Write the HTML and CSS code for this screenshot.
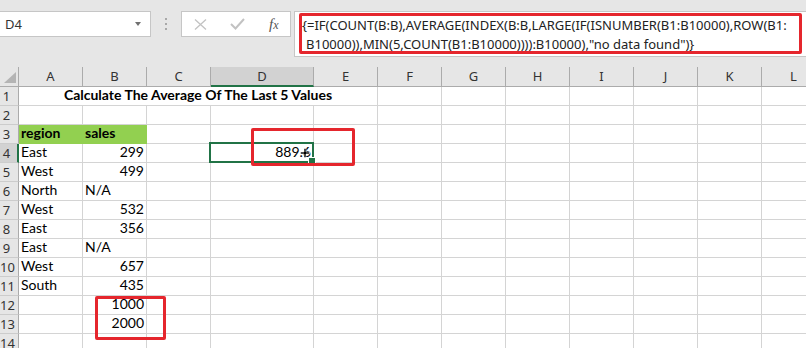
FILE: index.html
```html
<!DOCTYPE html>
<html lang="en">
<head>
    <meta charset="UTF-8">
    <meta name="viewport" content="width=device-width, initial-scale=1.0">
    <title>Average Of The Last 5 Values</title>
    <link rel="stylesheet" href="styles.css">
</head>
<body>
    <div class="formula-row">
        <div class="name-box">D4<span class="caret"></span></div>
        <div class="grip"><span></span><span></span><span></span></div>
        <div class="fx-buttons">
            <svg class="icon-cancel" width="13" height="11" viewBox="0 0 13 11"><path d="M1 0.5 L12 10.5 M12 0.5 L1 10.5" stroke="#c2c2c2" stroke-width="1.3" fill="none"/></svg>
            <svg class="icon-enter" width="15" height="12" viewBox="0 0 15 12"><path d="M1 6 L5.5 10.5 L14 1" stroke="#c2c2c2" stroke-width="2" fill="none"/></svg>
            <span class="fx"><i>f</i><i class="sub">x</i></span>
        </div>
        <div class="formula-bar">
            <div class="formula-text">
                <div>{=IF(COUNT(B:B),AVERAGE(INDEX(B:B,LARGE(IF(ISNUMBER(B1:B10000),ROW(B1:</div>
                <div class="wrap">B10000)),MIN(5,COUNT(B1:B10000)))):B10000),"no data found")}</div>
            </div>
        </div>
    </div>

    <div class="sheet">
        <div class="corner"></div>
        <div class="ch">A</div><div class="ch">B</div><div class="ch">C</div><div class="ch sel">D</div><div class="ch">E</div><div class="ch">F</div><div class="ch">G</div><div class="ch">H</div><div class="ch">I</div><div class="ch">J</div><div class="ch">K</div><div class="ch">L</div>

        <div class="rh"><span>1</span></div>
        <div class="title">Calculate The Average Of The Last 5 Values</div>
        <div></div><div></div><div></div><div></div><div></div><div></div><div></div>

        <div class="rh"><span>2</span></div>
        <div></div><div></div><div></div><div></div><div></div><div></div><div></div><div></div><div></div><div></div><div></div><div></div>

        <div class="rh"><span>3</span></div>
        <div class="hd">region</div><div class="hd">sales</div>
        <div></div><div></div><div></div><div></div><div></div><div></div><div></div><div></div><div></div><div></div>

        <div class="rh sel"><span>4</span></div>
        <div>East</div><div class="num">299</div><div></div>
        <div class="num active">889.6
            <svg class="pointer" width="10" height="10" viewBox="0 0 10 10"><path d="M4 0.5h2v3.5h3.5v2h-3.5v3.5h-2v-3.5h-3.5v-2h3.5z" fill="#000" stroke="#fff" stroke-width="0.6"/></svg>
            <span class="mark mark-result"></span>
        </div>
        <div></div><div></div><div></div><div></div><div></div><div></div><div></div><div></div>

        <div class="rh"><span>5</span></div>
        <div>West</div><div class="num">499</div>
        <div></div><div></div><div></div><div></div><div></div><div></div><div></div><div></div><div></div><div></div>

        <div class="rh"><span>6</span></div>
        <div>North</div><div>N/A</div>
        <div></div><div></div><div></div><div></div><div></div><div></div><div></div><div></div><div></div><div></div>

        <div class="rh"><span>7</span></div>
        <div>West</div><div class="num">532</div>
        <div></div><div></div><div></div><div></div><div></div><div></div><div></div><div></div><div></div><div></div>

        <div class="rh"><span>8</span></div>
        <div>East</div><div class="num">356</div>
        <div></div><div></div><div></div><div></div><div></div><div></div><div></div><div></div><div></div><div></div>

        <div class="rh"><span>9</span></div>
        <div>East</div><div>N/A</div>
        <div></div><div></div><div></div><div></div><div></div><div></div><div></div><div></div><div></div><div></div>

        <div class="rh"><span>10</span></div>
        <div>West</div><div class="num">657</div>
        <div></div><div></div><div></div><div></div><div></div><div></div><div></div><div></div><div></div><div></div>

        <div class="rh"><span>11</span></div>
        <div>South</div><div class="num">435</div>
        <div></div><div></div><div></div><div></div><div></div><div></div><div></div><div></div><div></div><div></div>

        <div class="rh"><span>12</span></div>
        <div></div><div class="num marked">1000<span class="mark mark-new"></span></div>
        <div></div><div></div><div></div><div></div><div></div><div></div><div></div><div></div><div></div><div></div>

        <div class="rh"><span>13</span></div>
        <div></div><div class="num">2000</div>
        <div></div><div></div><div></div><div></div><div></div><div></div><div></div><div></div><div></div><div></div>

        <div class="rh"><span>14</span></div>
        <div></div><div></div><div></div><div></div><div></div><div></div><div></div><div></div><div></div><div></div><div></div><div></div>
    </div>
</body>
</html>
```

FILE: styles.css
```css
* {
    box-sizing: border-box;
}

body {
    margin: 0;
    width: 806px;
    height: 348px;
    overflow: hidden;
    background-color: #e6e6e6;
    font-family: "Noto Sans", sans-serif;
    color: #000;
}

/* formula bar */
.formula-row {
    display: flex;
    align-items: flex-start;
    height: 67px;
    padding-top: 11px;
}

.name-box {
    width: 151px;
    height: 26px;
    background-color: #fff;
    border: 1px solid #c6c6c6;
    border-left: none;
    display: flex;
    align-items: center;
    justify-content: space-between;
    padding: 0 9px 0 5px;
    font-size: 13px;
    color: #333;
}

.caret {
    width: 0;
    height: 0;
    border-left: 3.5px solid transparent;
    border-right: 3.5px solid transparent;
    border-top: 4px solid #707070;
}

.grip {
    width: 30px;
    height: 26px;
    display: flex;
    flex-direction: column;
    align-items: center;
    justify-content: center;
    gap: 3px;
}

.grip span {
    width: 2px;
    height: 2px;
    background-color: #a8a8a8;
}

.fx-buttons {
    width: 110px;
    height: 26px;
    background-color: #fff;
    border: 1px solid #c6c6c6;
    display: flex;
    align-items: center;
    padding-left: 12px;
}

.icon-enter {
    margin-left: 23px;
}

.fx {
    margin-left: 24px;
    font-family: "Liberation Serif", serif;
    font-size: 15px;
    color: #555;
}

.fx .sub {
    font-size: 12px;
}

.formula-bar {
    flex: 1;
    height: 46px;
    margin-left: 3px;
    background-color: #fff;
    border: 1px solid #c6c6c6;
    border-right: none;
    padding: 1px 4px 0 4px;
}

.formula-text {
    height: 41px;
    border: 3px solid #e5262d;
    border-radius: 2px;
    font-size: 13px;
    line-height: 19px;
    white-space: nowrap;
    overflow: hidden;
    color: #222;
}

.formula-text .wrap {
    padding-left: 4px;
}

/* worksheet */
.sheet {
    display: grid;
    grid-template-columns: 19px repeat(3, 64px) 103px repeat(8, 64px);
    grid-template-rows: 20px;
    grid-auto-rows: 19px;
    background-color: #fff;
    font-family: Lato, sans-serif;
    font-size: 14px;
}

.sheet > div {
    border-right: 1px solid #d4d4d4;
    border-bottom: 1px solid #d4d4d4;
    padding: 0 2px;
    line-height: 16px;
    white-space: nowrap;
}

.sheet .corner {
    position: relative;
    background-color: #e6e6e6;
    border-color: #ababab;
}

.corner::after {
    content: "";
    position: absolute;
    right: 2px;
    bottom: 3px;
    width: 0;
    height: 0;
    border-left: 12px solid transparent;
    border-bottom: 11px solid #b4b4b4;
}

.sheet .ch {
    background-color: #e6e6e6;
    border-color: #ababab;
    text-align: center;
    font-family: "Noto Sans", sans-serif;
    font-size: 13px;
    line-height: 19px;
    color: #333;
}

.sheet .ch.sel {
    background-color: #d2d2d2;
    border-bottom: 2px solid #217346;
}

.sheet .rh {
    display: flex;
    padding: 0;
    background-color: #e6e6e6;
    border-right-color: #ababab;
    border-bottom-color: #cccccc;
    font-family: "Noto Sans", sans-serif;
    font-size: 13px;
    line-height: 18px;
    color: #333;
}

.rh span {
    width: 13px;
    text-align: center;
}

.sheet .rh.sel {
    background-color: #d2d2d2;
    border-right: 2px solid #217346;
}

.sheet .title {
    grid-column: span 5;
    text-align: center;
    font-weight: bold;
}

.sheet .hd {
    background-color: #92d050;
    border-color: #92d050;
    font-weight: bold;
}

.num {
    text-align: right;
}

.active,
.marked {
    position: relative;
}

.active::before {
    content: "";
    position: absolute;
    top: -2px;
    left: -2px;
    right: -1px;
    bottom: -1px;
    border: 2px solid #217346;
}

.active::after {
    content: "";
    position: absolute;
    right: -3px;
    bottom: -3px;
    width: 6px;
    height: 6px;
    background-color: #217346;
    border: 1px solid #fff;
}

.pointer {
    position: absolute;
    left: 89px;
    top: 4px;
}

.mark {
    position: absolute;
    z-index: 2;
    border: 3px solid #e5262d;
    border-radius: 2px;
}

.mark-result {
    left: 40px;
    top: -16px;
    width: 104px;
    height: 38px;
}

.mark-new {
    left: 12px;
    top: 0;
    width: 71px;
    height: 44px;
}
```
